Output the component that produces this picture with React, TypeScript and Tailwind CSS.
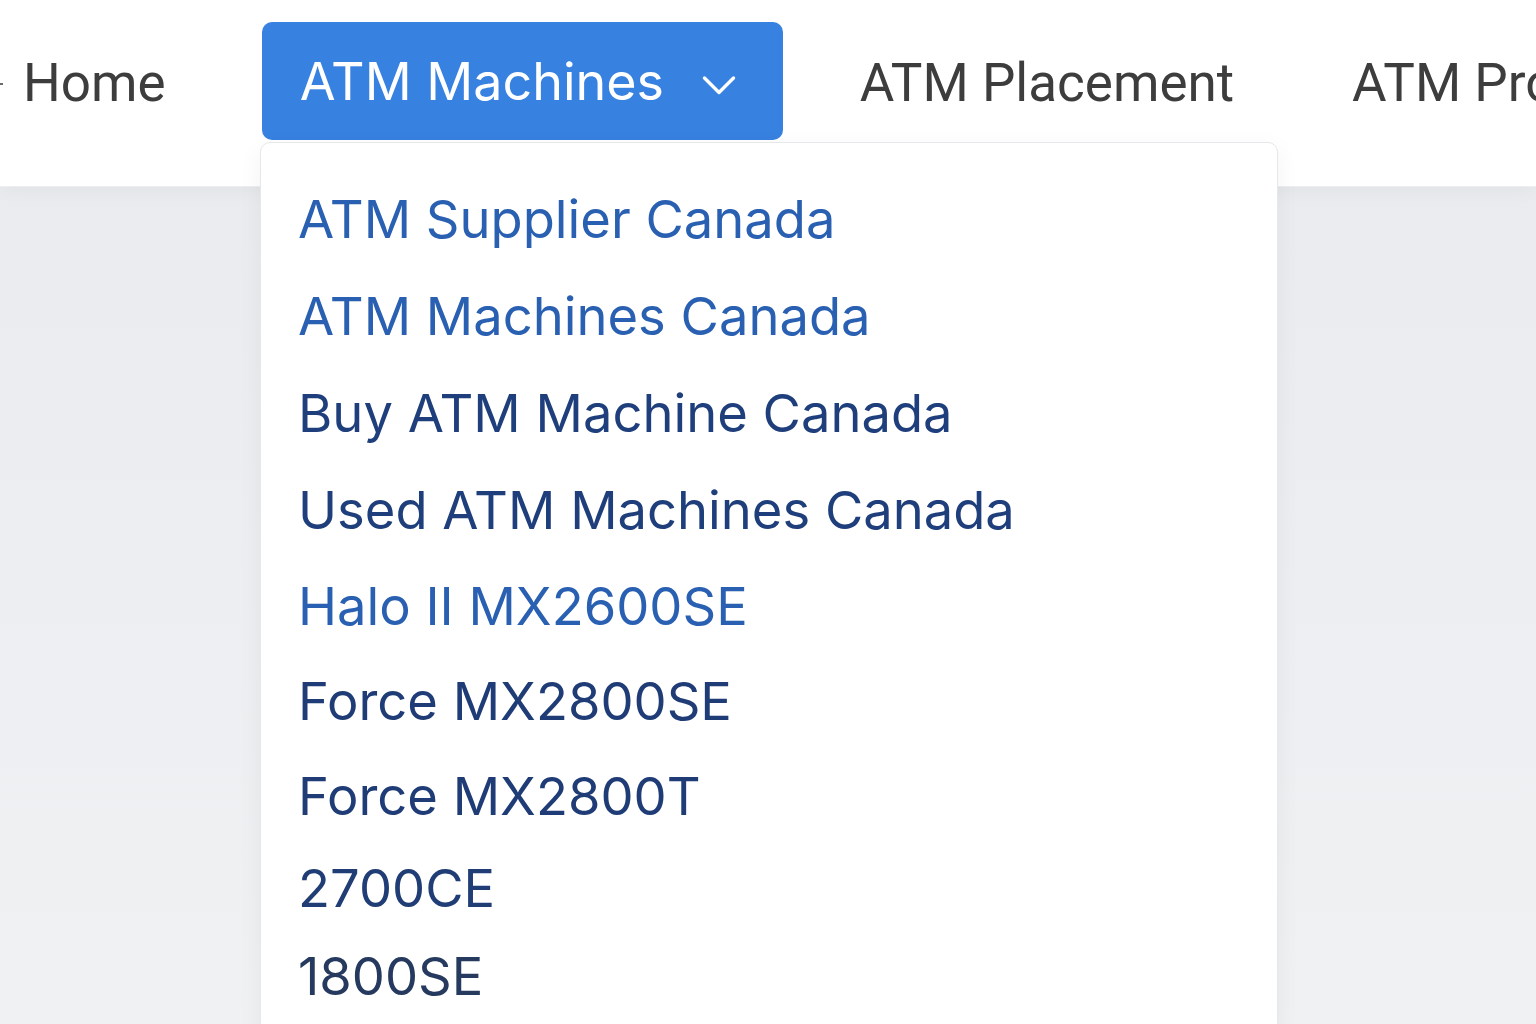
import React from 'react';

const items = [
  { label: 'ATM Supplier Canada', color: 'text-[#2a60b2]', h: 'h-[97px]' },
  { label: 'ATM Machines Canada', color: 'text-[#2a60b2]', h: 'h-[97px]' },
  { label: 'Buy ATM Machine Canada', color: 'text-[#1f3f7c]', h: 'h-[97px]' },
  { label: 'Used ATM Machines Canada', color: 'text-[#1f3f7c]', h: 'h-[97px]' },
  { label: 'Halo II MX2600SE', color: 'text-[#2a60b2]', h: 'h-[95px]' },
  { label: 'Force MX2800SE', color: 'text-[#1f3c76]', h: 'h-[95px]' },
  { label: 'Force MX2800T', color: 'text-[#1f3c76]', h: 'h-[95px]' },
  { label: '2700CE', color: 'text-[#203d75]', h: 'h-[88px]' },
  { label: '1800SE', color: 'text-[#26395e]', h: 'h-[88px]' },
];

const Chevron = () => (
  <svg width="34" height="21" viewBox="0 0 34 21" fill="none" className="ml-[38px] mt-[6px]">
    <polyline points="2.5,3 17,17.5 31.5,3" stroke="white" strokeWidth="3.4" strokeLinecap="round" strokeLinejoin="round" />
  </svg>
);

const App: React.FC = () => {
  return (
    <div className="relative w-[1536px] h-[1024px] overflow-hidden bg-gradient-to-b from-[#e9eaed] to-[#eff1f3] font-['Inter',sans-serif]">
      <nav className="relative z-10 h-[187px] bg-white shadow-[0_4px_18px_rgba(0,0,0,0.04)] border-b border-[#eceef0] flex items-start whitespace-nowrap">
        <div className="shrink-0 w-[3px] h-[2px] mt-[83px] bg-[#6b6b6b]" />
        <a className="shrink-0 ml-[20px] mt-[51px] text-[53px] leading-[64px] text-[#3d3d3d] font-['Roboto',sans-serif]">Home</a>
        <button className="shrink-0 ml-[96px] mt-[22px] w-[521px] h-[118px] rounded-[10px] bg-[#3781e0] flex items-center pl-[38px] pt-[2px] text-white text-[52px]">
          <span>ATM Machines</span>
          <Chevron />
        </button>
        <a className="shrink-0 ml-[77px] mt-[51px] text-[53px] leading-[64px] text-[#3d3d3d] font-['Roboto',sans-serif]">ATM Placement</a>
        <a className="shrink-0 ml-[118px] mt-[51px] text-[53px] leading-[64px] text-[#3d3d3d] font-['Roboto',sans-serif]">ATM Products</a>
      </nav>

      <div className="absolute z-20 left-[260px] top-[142px] w-[1018px] h-[920px] bg-white border border-[#e6e8eb] rounded-[10px] shadow-[0_6px_24px_rgba(0,0,0,0.05)] pt-[28px] pl-[37px]">
        {items.map((it) => (
          <div key={it.label} className={`${it.h} flex items-center text-[52.5px] whitespace-nowrap ${it.color}`}>
            {it.label}
          </div>
        ))}
      </div>
    </div>
  );
};

export default App;
